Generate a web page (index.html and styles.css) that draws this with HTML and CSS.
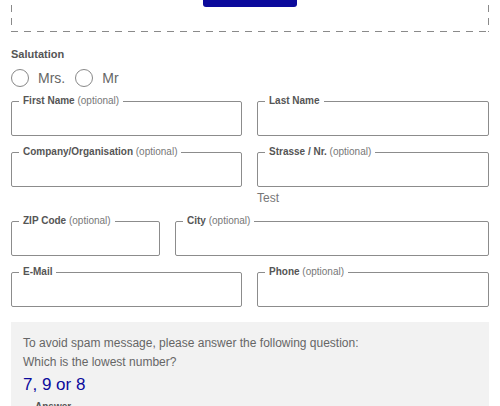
FILE: index.html
```html
<!doctype html>
<html>
<head>
<meta charset="utf-8">
<title>Contact</title>
<link rel="stylesheet" href="styles.css">
</head>

<body>
<div id="form">
  <div class="dropzone">
    <button type="button" class="upload">Upload</button>
  </div>

  <p class="group-title">Salutation</p>
  <div class="radios">
    <label class="radio"><span class="dot"></span>Mrs.</label>
    <label class="radio"><span class="dot"></span>Mr</label>
  </div>

  <div class="row">
    <fieldset class="field"><legend><b>First Name</b> (optional)</legend><input type="text"></fieldset>
    <fieldset class="field"><legend><b>Last Name</b></legend><input type="text"></fieldset>
  </div>
  <div class="row">
    <fieldset class="field"><legend><b>Company/Organisation</b> (optional)</legend><input type="text"></fieldset>
    <div>
      <fieldset class="field"><legend><b>Strasse / Nr.</b> (optional)</legend><input type="text"></fieldset>
      <p class="hint">Test</p>
    </div>
  </div>
  <div class="row row-zip">
    <fieldset class="field"><legend><b>ZIP Code</b> (optional)</legend><input type="text"></fieldset>
    <fieldset class="field"><legend><b>City</b> (optional)</legend><input type="text"></fieldset>
  </div>
  <div class="row">
    <fieldset class="field"><legend><b>E-Mail</b></legend><input type="text"></fieldset>
    <fieldset class="field"><legend><b>Phone</b> (optional)</legend><input type="text"></fieldset>
  </div>

  <div class="captcha">
    <p>To avoid spam message, please answer the following question:<br>Which is the lowest number?</p>
    <p class="question">7, 9 or 8</p>
    <fieldset class="field answer"><legend><b>Answer</b></legend><input type="text"></fieldset>
  </div>
</div>
</body>
</html>
```

FILE: styles.css
```css
*{ margin:0; padding:0; box-sizing:border-box}
body{ font-family:"Liberation Sans", Arial, sans-serif; color:#666; background:#fff; overflow:hidden}
#form{ padding:0 11px}

.dropzone{ height:92px; margin-top:-60px; display:flex; align-items:flex-end; justify-content:center; padding-bottom:25px;
  background:
    repeating-linear-gradient(90deg, #8a8a8a 0 7px, transparent 7px 13px) left bottom/100% 1px no-repeat,
    repeating-linear-gradient(180deg, #8a8a8a 0 7px, transparent 7px 13px) left top/1px 100% no-repeat,
    repeating-linear-gradient(180deg, #8a8a8a 0 7px, transparent 7px 13px) right top/1px 100% no-repeat}
.upload{ width:94px; height:36px; border:none; border-radius:3px; background:#0b0a9c; color:#fff; font-size:13px}

.group-title{ margin-top:15px; font-size:11px; line-height:15px; font-weight:bold; color:#555}
.radios{ display:flex; gap:10px; margin-top:6px; height:20px}
.radio{ display:flex; align-items:center; font-size:14px; color:#666}
.dot{ width:18px; height:18px; border:1px solid #888; border-radius:50%; margin-right:9px}

.row{ display:grid; grid-template-columns:231px 232px; column-gap:15px; align-items:start; margin-top:7px}
.row + .row{ margin-top:10px}
.row-zip{ grid-template-columns:149px 314px}

.field{ border:1px solid #8c8c8c; border-radius:2px; padding:0 7px; min-width:0}
.field legend{ font-size:10px; line-height:12px; color:#777; padding:0 4px; white-space:nowrap}
.field legend b{ color:#555}
.field input{ display:block; width:100%; height:28px; border:none; outline:none; background:transparent; font:13px "Liberation Sans", Arial, sans-serif}

.hint{ margin-top:5px; font-size:12px; line-height:13px; color:#777}

.captcha{ margin-top:15px; background:#f2f2f2; padding:12px 12px 12px}
.captcha p{ font-size:12px; line-height:19px; color:#666}
.captcha .question{ margin-top:1px; font-size:17px; line-height:24px; color:#0b0a9c}
.answer{ margin-top:4px; background:#fff}
```
